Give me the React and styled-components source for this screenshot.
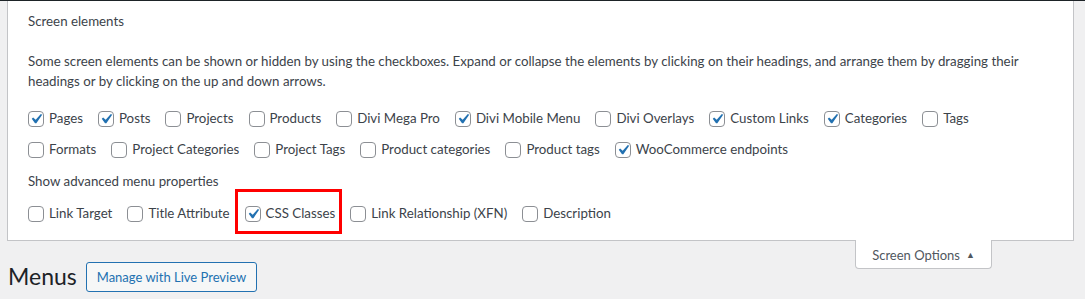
import React from 'react';
import styled, { createGlobalStyle } from 'styled-components';

const GlobalStyle = createGlobalStyle`
  html, body {
    margin: 0;
    padding: 0;
    background: #f0f0f1;
  }
  body {
    font-family: Lato, "Open Sans", sans-serif;
    font-size: 13.3px;
    color: #3c434a;
  }
`;

const boxes = [
  [
    { label: 'Pages', checked: true },
    { label: 'Posts', checked: true },
    { label: 'Projects' },
    { label: 'Products' },
    { label: 'Divi Mega Pro' },
    { label: 'Divi Mobile Menu', checked: true },
    { label: 'Divi Overlays' },
    { label: 'Custom Links', checked: true },
    { label: 'Categories', checked: true },
    { label: 'Tags' },
  ],
  [
    { label: 'Formats' },
    { label: 'Project Categories' },
    { label: 'Project Tags' },
    { label: 'Product categories' },
    { label: 'Product tags' },
    { label: 'WooCommerce endpoints', checked: true },
  ],
];

const advanced = [
  { label: 'Link Target' },
  { label: 'Title Attribute' },
  { label: 'CSS Classes', checked: true, marked: true },
  { label: 'Link Relationship (XFN)' },
  { label: 'Description' },
];

const Check = ({ label, checked, marked }) => (
  <Option $marked={marked}>
    <Box>
      <input type="checkbox" defaultChecked={checked} />
      <Tick viewBox="0 0 20 20">
        <path d="M14.83 4.89l1.34.94-5.81 8.38H9.02L5.78 9.67l1.34-1.25 2.57 2.4z" />
      </Tick>
    </Box>
    <Label>{label}</Label>
  </Option>
);

const CheckRow = ({ items }) => (
  <Row>
    {items.map((it) => (
      <Check key={it.label} {...it} />
    ))}
  </Row>
);

export default function App() {
  return (
    <>
      <GlobalStyle />
      <Page>
        <Panel>
          <Legend>Screen elements</Legend>
          <Description>
            Some screen elements can be shown or hidden by using the checkboxes. Expand or collapse
            the elements by clicking on their headings, and arrange them by dragging their headings
            or by clicking on the up and down arrows.
          </Description>
          {boxes.map((row, i) => (
            <CheckRow key={i} items={row} />
          ))}
          <Legend $advanced>Show advanced menu properties</Legend>
          <CheckRow items={advanced} />
        </Panel>
        <TabBar>
          <Tab>
            Screen Options <Arrow>▲</Arrow>
          </Tab>
        </TabBar>
        <TitleRow>
          <Title>Menus</Title>
          <PreviewButton>Manage with Live Preview</PreviewButton>
        </TitleRow>
      </Page>
    </>
  );
}

const Page = styled.div`
  border-top: 1px solid #1d2327;
  min-height: 298px;
`;

const Panel = styled.div`
  margin: 0 11px 0 7px;
  background: #fff;
  border: 1px solid #c3c4c7;
  border-top: none;
  padding: 10px 20px 5px 20px;
  height: 224px;
`;

const Legend = styled.div`
  line-height: 19px;
  margin: ${(p) => (p.$advanced ? '7px 0 7px' : '1px 0 0')};
`;

const Description = styled.p`
  margin: 21px 0 12px;
  line-height: 19.5px;
  padding-right: 10px;
`;

const Row = styled.div`
  display: flex;
  flex-wrap: wrap;
  height: 31px;
  align-items: center;
`;

const Option = styled.label`
  position: relative;
  display: flex;
  align-items: center;
  margin: 0 15px 0 0;
  padding: 0;
  line-height: 19px;

  ${(p) =>
    p.$marked &&
    `
    &::after {
      content: '';
      position: absolute;
      left: -10px;
      right: -7px;
      top: -15px;
      bottom: -11px;
      border: 3px solid #ff0000;
      box-sizing: border-box;
    }
  `}
`;

const Box = styled.span`
  position: relative;
  display: block;
  flex: none;
  width: 16px;
  height: 16px;

  & > input {
    appearance: none;
    display: block;
    margin: 0;
    padding: 0;
    width: 16px;
    height: 16px;
    box-sizing: border-box;
    border: 1px solid #8c8f94;
    border-radius: 4px;
    background: #fff;
  }

  & > input:not(:checked) + svg {
    display: none;
  }
`;

const Tick = styled.svg`
  position: absolute;
  left: -2px;
  top: -2px;
  width: 20px;
  height: 20px;
  fill: #2271b1;
  pointer-events: none;
`;

const Label = styled.span`
  margin-left: 5px;
`;

const TabBar = styled.div`
  display: flex;
  justify-content: flex-end;
  margin-right: 93px;
`;

const Tab = styled.div`
  width: 137px;
  height: 29px;
  box-sizing: border-box;
  background: #fff;
  border: 1px solid #c3c4c7;
  border-top: none;
  border-radius: 0 0 4px 4px;
  margin-top: -1px;
  display: flex;
  align-items: center;
  justify-content: center;
  color: #50575e;
  font-size: 13px;
  padding-top: 1px;
`;

const Arrow = styled.span`
  font-size: 9px;
  margin-left: 6px;
  color: #50575e;
`;

const TitleRow = styled.div`
  display: flex;
  align-items: center;
  padding-left: 8px;
  margin-top: -9px;
  gap: 9px;
`;

const Title = styled.h1`
  margin: 0;
  font-size: 23px;
  font-weight: 400;
  color: #1d2327;
  line-height: 29px;
`;

const PreviewButton = styled.button`
  font-family: inherit;
  font-size: 13px;
  color: #2271b1;
  background: #f6f7f7;
  border: 1px solid #2271b1;
  border-radius: 3px;
  height: 30px;
  padding: 0 10px;
  margin-top: 2px;
`;
